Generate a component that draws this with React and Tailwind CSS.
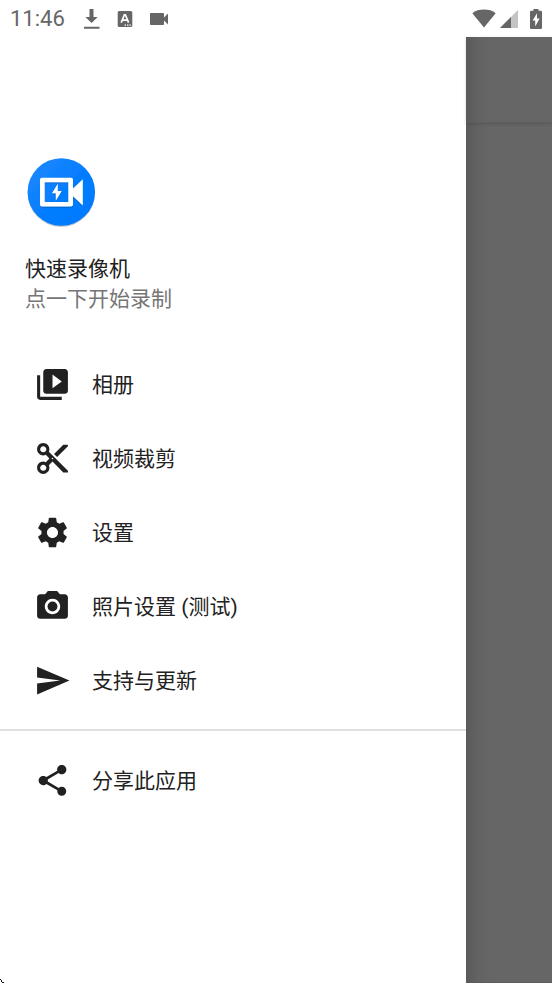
import React from 'react';
import {
  MdCameraAlt,
  MdContentCut,
  MdSend,
  MdSettings,
  MdShare,
  MdVideocam,
  MdVideoLibrary,
} from 'react-icons/md';

const mainItems = [
  { label: '相册', icon: MdVideoLibrary },
  { label: '视频裁剪', icon: MdContentCut },
  { label: '设置', icon: MdSettings },
  { label: '照片设置 (测试)', icon: MdCameraAlt },
  { label: '支持与更新', icon: MdSend },
];

const shareItems = [{ label: '分享此应用', icon: MdShare }];

function StatusBar() {
  return (
    <header className="h-[37px] flex items-center justify-between px-[10px] text-[#666666]">
      <div className="flex items-center">
        <span className="text-[22px] leading-6">11:46</span>

        {/* Download finished */}
        <svg className="ml-[19px] w-4 h-5" viewBox="0 0 16 20" fill="currentColor">
          <path d="M5.5 0h4v8h4.2L7.6 14 1.4 8h4.1zM0 17.7h15.5v2H0z" />
        </svg>

        {/* Input method */}
        <svg className="ml-[17px] w-4 h-4" viewBox="0 0 16 16">
          <rect x="0.7" width="14.6" height="16" rx="1.6" fill="currentColor" />
          <path d="M4.2 11.6 7.4 3.8h1l3.2 7.8M5.4 9.2h4.8" fill="none" stroke="#fff" strokeWidth="1.7" />
          <path d="M7.6 13.4h1.4v1.3H7.6zM10 13.4h1.4v1.3H10zM12.4 13.4h1.4v1.3h-1.4z" fill="#fff" />
        </svg>

        <MdVideocam className="ml-[14px]" size={24} />
      </div>

      <div className="flex items-center">
        {/* Wifi */}
        <svg className="w-6 h-5" viewBox="0 0 24 20" fill="currentColor">
          <path d="M0.3 4.2C3.4 1.6 7.4 0.6 12 0.6s8.6 1 11.7 3.6L12 18.6z" />
        </svg>

        {/* Mobile signal */}
        <svg className="ml-1 w-[18px] h-5" viewBox="0 0 18 20">
          <path d="M0 19 18 1v18z" fill="#c4c4c4" />
          <path d="M0 19 11 8v11z" fill="currentColor" />
        </svg>

        {/* Battery */}
        <svg className="ml-3 w-3 h-5" viewBox="0 0 12 20" fill="currentColor">
          <path d="M3.5 0h5v1.8h2.2c.7 0 1.3.5 1.3 1.2v15.7c0 .7-.6 1.3-1.3 1.3H1.3C.6 20 0 19.4 0 18.7V3c0-.7.6-1.2 1.3-1.2h2.2z" />
          <path d="M7 4.2 2.6 11.4h2.6v6l4.4-8H7z" fill="#fff" />
        </svg>
      </div>
    </header>
  );
}

function AppLogo() {
  return (
    <svg className="w-[72px] h-[72px]" viewBox="0 0 72 72">
      <defs>
        <linearGradient id="logo-fill" x1="0" y1="0" x2="1" y2="1">
          <stop offset="0" stopColor="#1f8bff" />
          <stop offset="0.5" stopColor="#067dff" />
          <stop offset="1" stopColor="#0078ff" />
        </linearGradient>
        <filter id="logo-shadow" x="-10%" y="-10%" width="120%" height="120%">
          <feDropShadow dx="0" dy="0.8" stdDeviation="0.7" floodOpacity="0.35" />
        </filter>
      </defs>
      <circle cx="36.3" cy="36" r="33.7" fill="url(#logo-fill)" filter="url(#logo-shadow)" />
      <g fill="#fff" filter="url(#logo-shadow)">
        <path
          fillRule="evenodd"
          d="M17 21.7h29c1.2 0 2 .8 2 2v8.8l9.8-9.3v26.3L48 40.2v8.3c0 1.2-.8 2-2 2H17c-1.2 0-2-.8-2-2V23.7c0-1.2.8-2 2-2zM19.7 26.2v19.8h23.6V26.2z"
        />
        <path d="M32.8 27.8 27 37.3h3.8v7.5l5.9-9.8h-3.9z" />
      </g>
    </svg>
  );
}

function MenuList({ items }) {
  return (
    <ul>
      {items.map(({ label, icon: Icon }) => (
        <li key={label}>
          <button type="button" className="w-full h-[74px] px-[34px] flex items-center gap-[21px] text-left">
            <Icon className="shrink-0" size={37} />
            <span className="pt-[2px]">{label}</span>
          </button>
        </li>
      ))}
    </ul>
  );
}

export default function App() {
  return (
    <div className="min-h-screen flex flex-col bg-white text-[21px] leading-[30px] text-[#212121] font-['Roboto','Noto_Sans_CJK_SC',sans-serif]">
      <StatusBar />

      <div className="flex-1 flex">
        {/* Drawer */}
        <aside className="flex-1 flex flex-col bg-white">
          <div className="pt-[119px] pl-[25px]">
            <AppLogo />
            <h1 className="mt-[26px] font-normal">快速录像机</h1>
            <p className="text-[#757575]">点一下开始录制</p>
          </div>

          <nav className="mt-[33px]">
            <MenuList items={mainItems} />
            <hr className="my-3 border-t-2 border-[#e0e0e0]" />
            <MenuList items={shareItems} />
          </nav>

          <svg className="mt-auto w-1 h-1" viewBox="0 0 4 4" fill="#111" shapeRendering="crispEdges">
            <path d="M0 0h1v1H0zM1 1h1v1H1zM2 3h2v1H2zM1 2h1v1H1z" />
          </svg>
        </aside>

        {/* Dimmed page behind the drawer */}
        <div className="w-[86px] flex flex-col bg-[#666666] bg-linear-to-r from-[#5a5a5a] via-[#636363] via-15% to-[#666666] to-30%">
          <div className="h-[86px] border-b border-[#5e5e5e] shadow-[0_1px_3px_rgba(0,0,0,0.15)]" />
          <div className="flex-1 border-b border-[#5c585c]" />
        </div>
      </div>
    </div>
  );
}
